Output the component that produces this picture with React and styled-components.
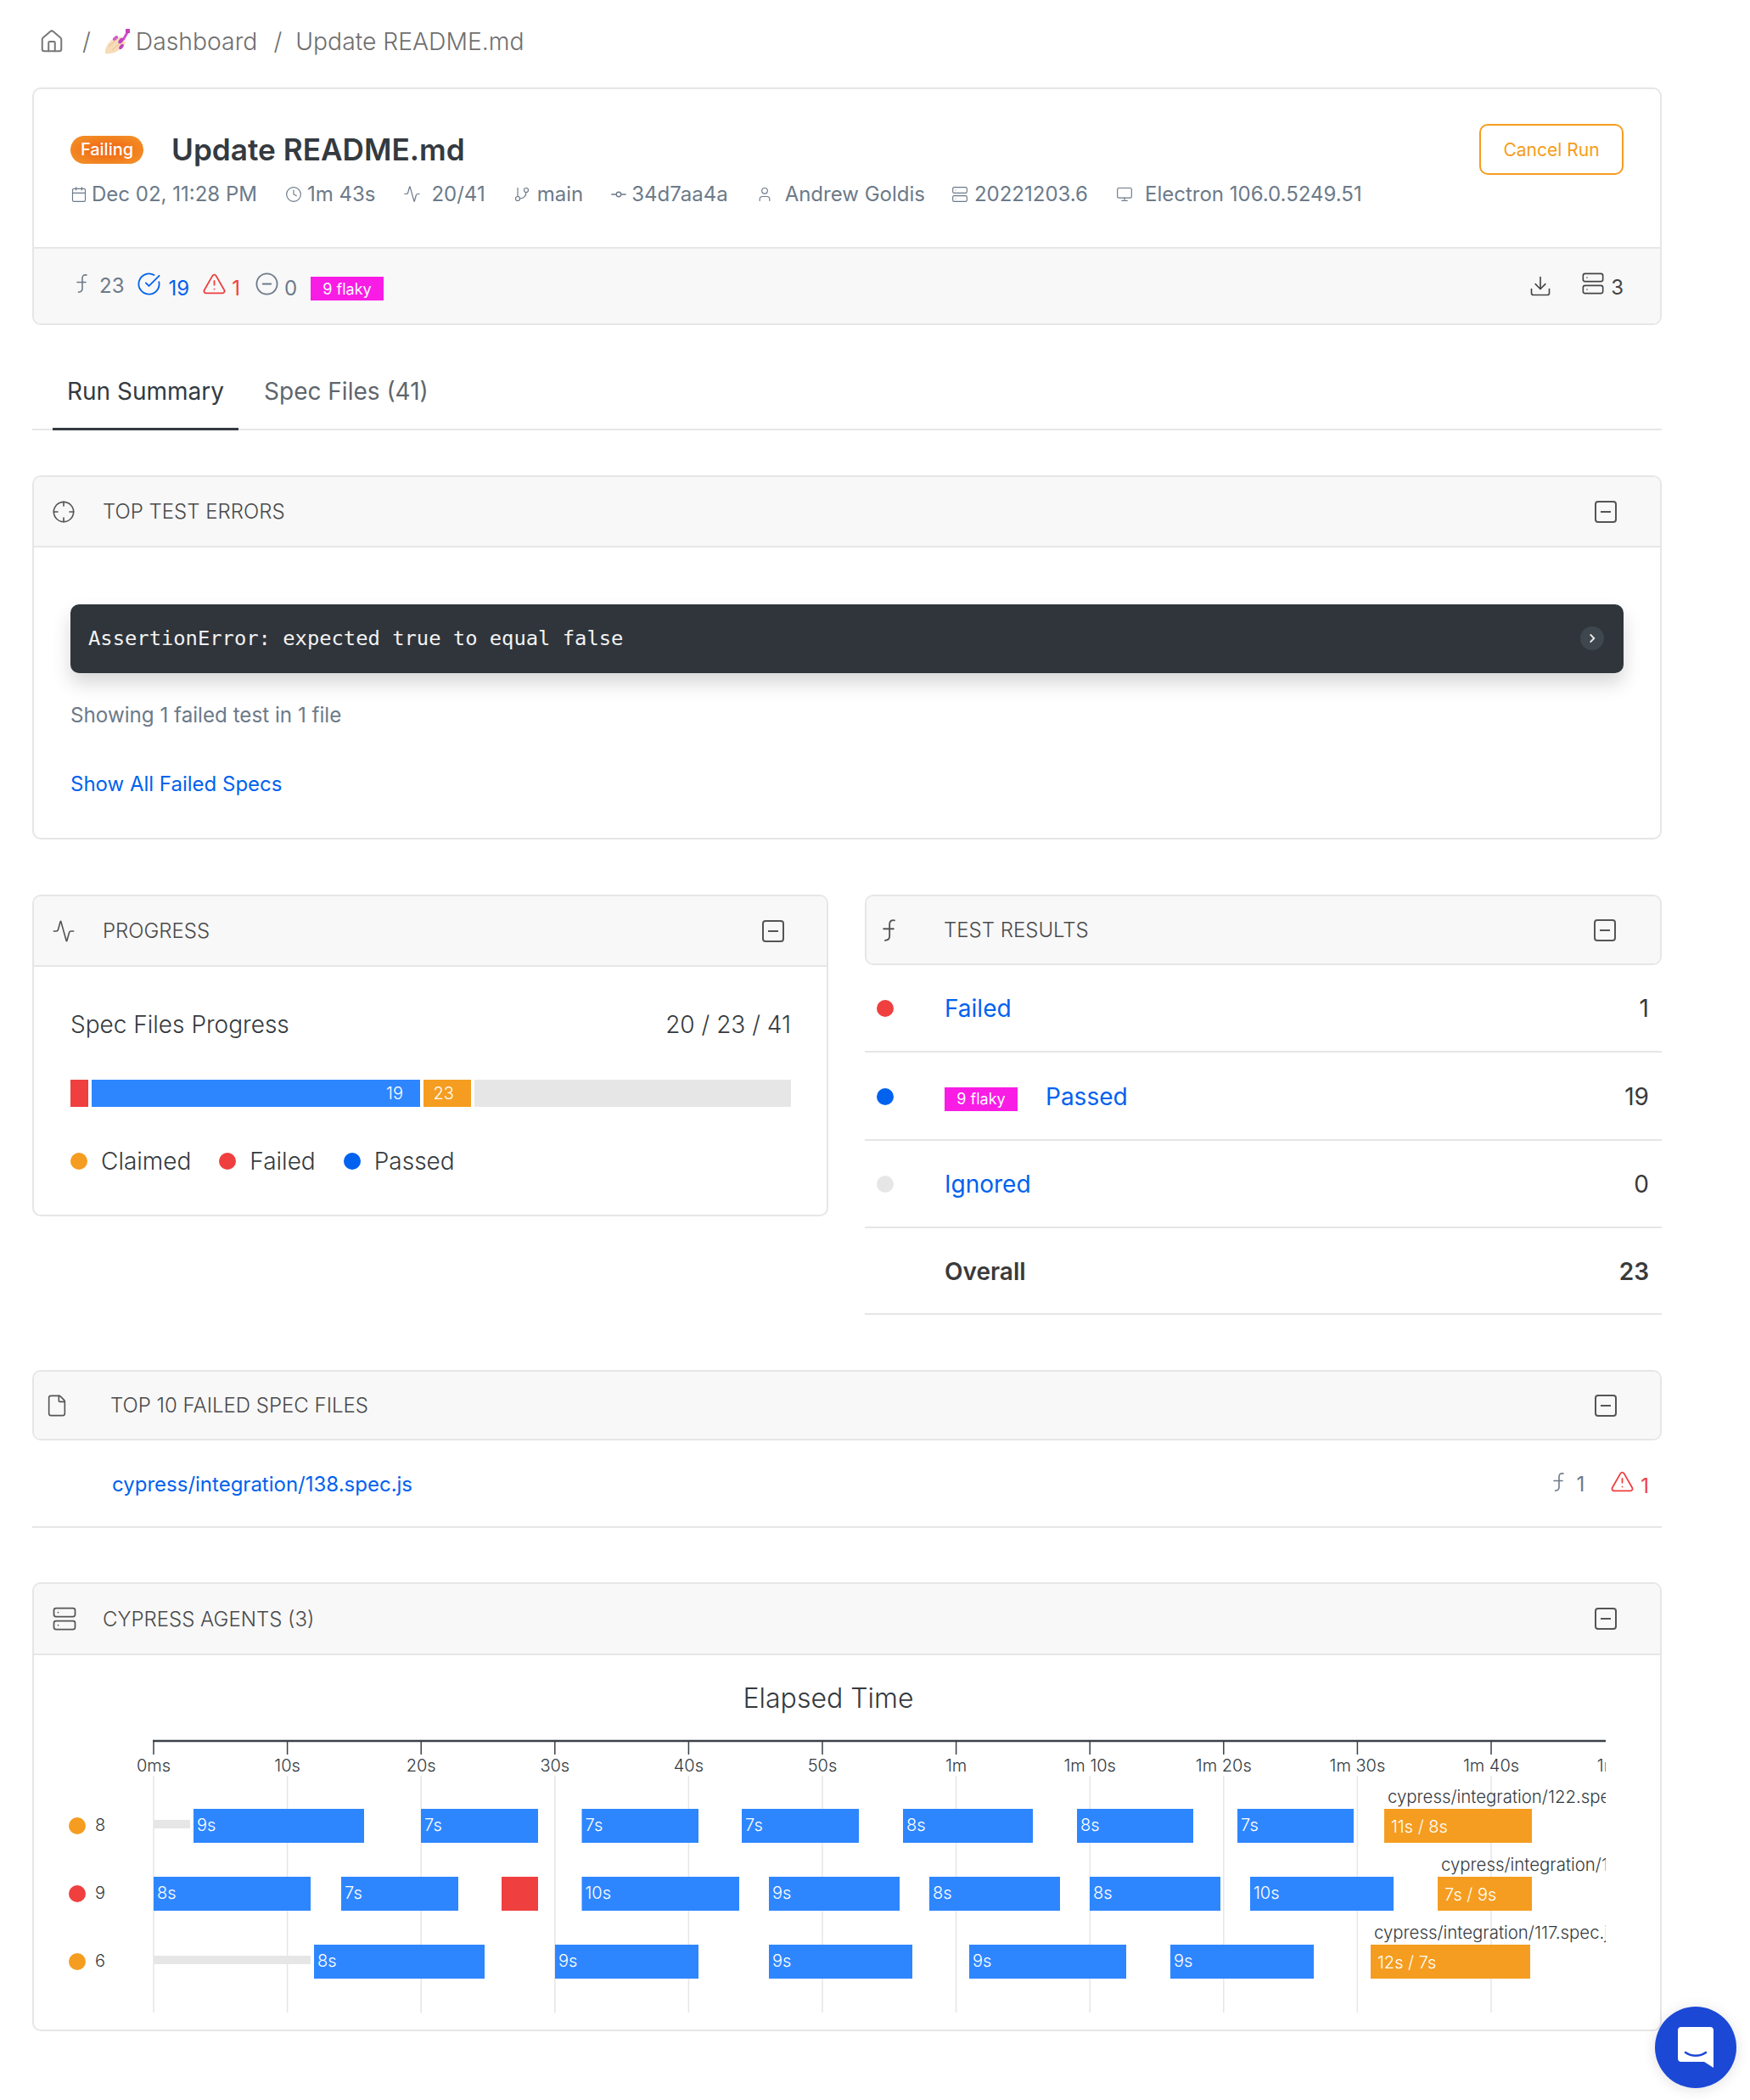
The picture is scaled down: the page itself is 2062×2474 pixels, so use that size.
import React from 'react'
import styled, { createGlobalStyle } from 'styled-components'
import {
  Activity,
  Calendar,
  CircleCheckBig,
  CircleMinus,
  Clock,
  Crosshair,
  Download,
  File,
  GitBranch,
  GitCommitHorizontal,
  Home,
  Monitor,
  Server,
  TriangleAlert,
  User,
} from 'lucide-react'

const GlobalStyles = createGlobalStyle`
  html, body {
    margin: 0;
    padding: 0;
    background: #fff;
  }
  body {
    font-family: 'Inter', 'Liberation Sans', sans-serif;
    color: #343a40;
  }
  * { box-sizing: border-box; }
`

const Page = styled.div`
  margin-left: 38px;
  width: 1920px;
  height: 2474px;
  overflow: hidden;
`

const Breadcrumb = styled.nav`
  height: 103px;
  padding: 0 0 6px 8px;
  display: flex;
  align-items: center;
  font-size: 28.3px;
  font-weight: 300;
  color: #6f6f6f;
`

const Slash = styled.span`
  margin: ${p => p.$margin};
`

const Card = styled.section`
  border: 2px solid #e6e6e6;
  border-radius: 10px;
  overflow: hidden;
  background: #fff;
`

const RunHead = styled.div`
  height: 186px;
  padding: 40px 43px 0 43px;
  position: relative;
`

const TitleRow = styled.div`
  display: flex;
  align-items: center;
  height: 62px;
`

const StatusBadge = styled.span`
  width: 86px;
  height: 33px;
  border-radius: 17px;
  display: flex;
  align-items: center;
  justify-content: center;
  color: #fff;
  font-size: 20px;
  font-weight: 500;
  background: radial-gradient(ellipse at center, #f0610f 0%, #f28a25 75%);
`

const Title = styled.h1`
  margin: 0 0 0 33px;
  font-size: 35.2px;
  font-weight: 600;
  color: #343a40;
`

const CancelButton = styled.button`
  margin-left: auto;
  width: 170px;
  height: 60px;
  border: 2px solid #f59d20;
  border-radius: 10px;
  background: #fff;
  color: #f59d20;
  font-family: inherit;
  font-size: 21px;
`

const MetaRow = styled.div`
  display: flex;
  align-items: center;
  margin-top: 7px;
  font-size: 24px;
  color: #6c7a89;
  white-space: nowrap;
`

const MetaItem = styled.span`
  display: inline-flex;
  align-items: center;
  gap: ${p => p.$gap}px;
  margin-right: ${p => p.$after ?? 33}px;
  svg { flex: none; }
`

const StatBar = styled.div`
  height: 90px;
  border-top: 2px solid #e6e6e6;
  background: #f8f8f8;
  padding: 0 43px 0 44px;
  display: flex;
  align-items: center;
`

const Stat = styled.span`
  display: inline-flex;
  align-items: flex-end;
  gap: ${p => p.$gap ?? 8}px;
  margin-right: ${p => p.$after ?? 17}px;
  font-size: 24px;
  line-height: 30px;
  color: ${p => p.$color || '#6c7a89'};
  svg { flex: none; margin-bottom: 6px; }
`

const FlakyTag = styled.span`
  display: inline-flex;
  align-items: center;
  justify-content: center;
  width: 86px;
  height: 28px;
  margin-top: 6px;
  background: #f81ce5;
  color: #fff;
  font-size: 18px;
`

const StatRight = styled.div`
  margin-left: auto;
  display: flex;
  align-items: center;
  gap: 34px;
  color: #444;
`

const Tabs = styled.div`
  height: 124px;
  border-bottom: 2px solid #e6e6e6;
  display: flex;
  align-items: flex-end;
  padding-left: 24px;
`

const Tab = styled.div`
  height: 78px;
  padding: 0 ${p => p.$pad}px 11px;
  display: flex;
  align-items: center;
  font-size: 28px;
  margin-bottom: -2px;
  color: ${p => (p.$active ? '#343a40' : '#5f666d')};
  border-bottom: 3px solid ${p => (p.$active ? '#343a40' : 'transparent')};
`

const SectionCard = styled(Card)`
  margin-top: ${p => p.$top}px;
  height: ${p => p.$height}px;
`

const Header = styled.header`
  height: ${p => p.$height || 83}px;
  display: flex;
  align-items: center;
  padding: 0 ${p => p.$right || 51}px 0 ${p => p.$left}px;
  background: #f8f8f8;
  border-bottom: ${p => (p.$flat ? '0' : '2px solid #e6e6e6')};
  color: #555;
  svg { flex: none; }
`

const HeaderIcon = styled.span`
  width: ${p => p.$width}px;
  display: flex;
  align-items: center;
`

const HeaderTitle = styled.h2`
  margin: 0;
  font-size: 24px;
  font-weight: 300;
  color: #4a4a4a;
  flex: 1;
`

const ErrorBody = styled.div`
  padding: 67px 43px 0;
`

const ErrorBox = styled.div`
  height: 81px;
  border-radius: 10px;
  background: #2f353b;
  color: #f2f2f2;
  font-family: 'DejaVu Sans Mono', 'Liberation Mono', monospace;
  font-size: 23.8px;
  padding: 0 21px 1px;
  display: flex;
  align-items: center;
  justify-content: space-between;
  box-shadow: 0 12px 22px rgba(0, 0, 0, 0.16);
`

const Chevron = styled.span`
  width: 28px;
  height: 28px;
  margin-right: 2px;
  border-radius: 50%;
  background: #3f474e;
  display: flex;
  align-items: center;
  justify-content: center;
`

const MutedLine = styled.p`
  margin: 32px 0 0;
  font-size: 24.2px;
  line-height: 36px;
  color: #6c7a89;
`

const TextLink = styled.a`
  display: block;
  color: #0062ee;
  font-size: 24px;
  line-height: 36px;
  margin-top: ${p => p.$top || 0}px;
`

const Columns = styled.div`
  display: flex;
  gap: 43px;
  margin-top: 65px;
  align-items: flex-start;
`

const ProgressCol = styled.div`
  width: 938px;
  flex: none;
`

const ResultsCol = styled.div`
  flex: 1;
`

const ProgressBody = styled.div`
  padding: 46px 42px 0 43px;
`

const ProgressTitle = styled.div`
  display: flex;
  justify-content: space-between;
  font-size: 28px;
  font-weight: 300;
  line-height: 44px;
  color: #343a40;
`

const Bar = styled.div`
  display: flex;
  gap: 4px;
  height: 32px;
  margin-top: 43px;
`

const Segment = styled.div`
  width: ${p => p.$width}px;
  flex: ${p => (p.$grow ? 1 : 'none')};
  background: ${p => p.$color};
  color: #fff;
  font-size: 20px;
  font-weight: 300;
  display: flex;
  align-items: center;
  justify-content: flex-end;
  padding-right: ${p => p.$pad || 0}px;
`

const Legend = styled.div`
  display: flex;
  align-items: center;
  margin-top: 44px;
  font-size: 28px;
  font-weight: 300;
  line-height: 40px;
`

const Dot = styled.span`
  width: 20px;
  height: 20px;
  flex: none;
  border-radius: 50%;
  background: ${p => p.$color};
`

const LegendItem = styled.span`
  display: inline-flex;
  align-items: center;
  gap: 16px;
  margin-right: 33px;
`

const ResultRow = styled.div`
  height: ${p => p.$height}px;
  border-bottom: 2px solid #e6e6e6;
  display: flex;
  align-items: center;
  padding: 1px 15px 0 14px;
  font-size: 28px;
`

const ResultName = styled.span`
  margin-left: 60px;
  flex: 1;
  display: flex;
  align-items: center;
  gap: 33px;
  color: #0062ee;
  font-weight: 400;
`

const OverallName = styled.span`
  margin-left: 80px;
  flex: 1;
  font-weight: 600;
  color: #3a3a3a;
`

const ResultCount = styled.span`
  color: #3a3a3a;
  font-weight: ${p => p.$weight || 400};
`

const SpecRow = styled.div`
  height: 103px;
  border-bottom: 2px solid #e6e6e6;
  display: flex;
  align-items: center;
  padding: 2px 15px 0 94px;
`

const SpecCounts = styled.div`
  margin-left: auto;
  display: flex;
  align-items: center;
`

const ChartSvg = styled.svg`
  display: block;
  font-family: 'Inter', 'Liberation Sans', sans-serif;
`

const ChatBubble = styled.div`
  position: fixed;
  right: 16px;
  bottom: 14px;
  width: 96px;
  height: 96px;
  border-radius: 50%;
  background: #1c48d6;
  display: flex;
  align-items: center;
  justify-content: center;
  box-shadow: 0 2px 16px rgba(0, 0, 0, 0.12);
`

const MinusBox = () => (
  <svg width="26" height="26" viewBox="0 0 26 26" fill="none" stroke="#555" strokeWidth="2">
    <rect x="1" y="1" width="24" height="24" rx="3" />
    <path d="M7 13h12" />
  </svg>
)

const FnIcon = ({ size = 24, color = 'currentColor' }) => (
  <svg width={size} height={size} viewBox="0 0 24 24" fill="none" stroke={color} strokeWidth="1.6" strokeLinecap="round">
    <path d="M18 2c-3-.6-5 .5-5 4v12c0 3-1.5 4-4.5 4.2" />
    <path d="M7 10.5h10" />
  </svg>
)

const NailEmoji = () => (
  <svg width="30" height="30" viewBox="0 0 30 30" style={{ margin: '0 7px 0 16px' }}>
    <path d="M1 29C0 22 5 16 10 12l9-3 6 8-5 6c-6 5-12 7-19 6Z" fill="#f6dcb8" />
    <path d="M5 21l8-7M9 25l8-7" stroke="#e3bd90" strokeWidth="1" />
    <path d="M22 13 29 1" stroke="#d14fc9" strokeWidth="3" />
    <rect x="25" y="0" width="5" height="5" fill="#c83fbb" />
    <ellipse cx="13" cy="11" rx="3.6" ry="2" transform="rotate(-40 13 11)" fill="#cf5fd0" />
    <ellipse cx="19.5" cy="14" rx="4" ry="2.3" transform="rotate(-50 19.5 14)" fill="#c243bf" />
    <ellipse cx="20" cy="21" rx="3.6" ry="2" transform="rotate(-50 20 21)" fill="#c243bf" />
  </svg>
)

const ChatIcon = () => (
  <svg width="44" height="50" viewBox="0 0 44 50">
    <path d="M5 1h34a4 4 0 0 1 4 4v44l-11-7H5a4 4 0 0 1-4-4V5a4 4 0 0 1 4-4Z" fill="#fff" />
    <path d="M10 31c7 5 17 5 24 0" fill="none" stroke="#1c48d6" strokeWidth="2.6" strokeLinecap="round" />
  </svg>
)

const ticks = ['0ms', '10s', '20s', '30s', '40s', '50s', '1m', '1m 10s', '1m 20s', '1m 30s', '1m 40s', '1m 50s']
const tickX = i => 181 + i * 157.6

const lanes = [
  {
    id: 8,
    color: '#f59d20',
    y: 2131,
    wait: [181, 224],
    bars: [
      [228, 429, '9s'], [496, 634, '7s'], [685.5, 823, '7s'], [874, 1012, '7s'],
      [1064, 1217, '8s'], [1269, 1406, '8s'], [1458, 1595, '7s'],
    ],
    running: [1631, 1805, '11s / 8s', 'cypress/integration/122.spec.js', 1635],
  },
  {
    id: 9,
    color: '#ef3f3f',
    y: 2211,
    bars: [
      [181, 366, '8s'], [402, 540, '7s'], [591, 634, '', '#ef3f3f'], [685.5, 871, '10s'],
      [906, 1060, '9s'], [1095, 1249, '8s'], [1284, 1438, '8s'], [1473, 1642, '10s'],
    ],
    running: [1694, 1805, '7s / 9s', 'cypress/integration/119.spec.js', 1698],
  },
  {
    id: 6,
    color: '#f59d20',
    y: 2291,
    wait: [181, 366],
    bars: [
      [370, 571, '8s'], [654, 823, '9s'], [906, 1075, '9s'], [1142, 1327, '9s'], [1379, 1548, '9s'],
    ],
    running: [1615, 1803, '12s / 7s', 'cypress/integration/117.spec.js', 1619],
  },
]

// drawn in page coordinates, the viewBox starts where the card's inside starts
const ElapsedChart = () => (
  <ChartSvg width="1916" height="441" viewBox="40 1950 1916 441">
    <defs>
      <clipPath id="plot">
        <rect x="40" y="1950" width="1852" height="441" />
      </clipPath>
    </defs>
    <text x="976" y="2000" fontSize="32" fontWeight="300" fill="#343a40" textAnchor="middle" dominantBaseline="central">
      Elapsed Time
    </text>
    <g clipPath="url(#plot)">
      {ticks.map((t, i) => (
        <g key={t}>
          <line x1={tickX(i)} x2={tickX(i)} y1="2092" y2="2371" stroke="#e6e6e6" strokeWidth="1.5" />
          <line x1={tickX(i)} x2={tickX(i)} y1="2051" y2="2067" stroke="#3b4148" strokeWidth="1.5" />
          <text x={tickX(i)} y="2080" fontSize="20" fontWeight="300" fill="#343a40" textAnchor="middle" dominantBaseline="central">
            {t}
          </text>
        </g>
      ))}
      <line x1="180" x2="1892" y1="2051" y2="2051" stroke="#3b4148" strokeWidth="2.5" />
      {lanes.map(lane => (
        <g key={lane.id}>
          <circle cx="91" cy={lane.y + 20} r="10" fill={lane.color} />
          <text x="112" y={lane.y + 19} fontSize="20" fontWeight="300" fill="#343a40" dominantBaseline="central">
            {lane.id}
          </text>
          {lane.wait && (
            <rect x={lane.wait[0]} y={lane.y + 13} width={lane.wait[1] - lane.wait[0]} height="10" fill="#e6e6e6" />
          )}
          {lane.bars.map(([from, to, label, fill]) => (
            <g key={from}>
              <rect x={from} y={lane.y} width={to - from} height="40" fill={fill || '#2e86ff'} />
              <text x={from + 4} y={lane.y + 19} fontSize="20" fontWeight="300" fill="#fff" dominantBaseline="central">
                {label}
              </text>
            </g>
          ))}
          <rect x={lane.running[0]} y={lane.y} width={lane.running[1] - lane.running[0]} height="40" fill="#f59d20" />
          <text x={lane.running[0] + 8} y={lane.y + 21} fontSize="20" fontWeight="300" fill="#fff" dominantBaseline="central">
            {lane.running[2]}
          </text>
          <text x={lane.running[4]} y={lane.y - 15} fontSize="20.4" fontWeight="300" fill="#343a40" dominantBaseline="central">
            {lane.running[3]}
          </text>
        </g>
      ))}
    </g>
  </ChartSvg>
)

export default function App() {
  return (
    <>
      <GlobalStyles />
      <Page>
        <Breadcrumb>
          <Home size={30} strokeWidth={1.6} color="#777" />
          <Slash $margin="0 0 0 21px">/</Slash>
          <NailEmoji />
          <span>Dashboard</span>
          <Slash $margin="0 16px 0 19px">/</Slash>
          <span>Update README.md</span>
        </Breadcrumb>

        <Card>
          <RunHead>
            <TitleRow>
              <StatusBadge>Failing</StatusBadge>
              <Title>Update README.md</Title>
              <CancelButton>Cancel Run</CancelButton>
            </TitleRow>
            <MetaRow>
              <MetaItem $gap={5}><Calendar size={20} strokeWidth={1.4} />Dec 02, 11:28 PM</MetaItem>
              <MetaItem $gap={6}><Clock size={20} strokeWidth={1.4} />1m 43s</MetaItem>
              <MetaItem $gap={12}><Activity size={21} strokeWidth={1.4} />20/41</MetaItem>
              <MetaItem $gap={8} $after={31}><GitBranch size={20} strokeWidth={1.4} />main</MetaItem>
              <MetaItem $gap={4}><GitCommitHorizontal size={22} strokeWidth={1.4} />34d7aa4a</MetaItem>
              <MetaItem $gap={14} $after={31}><User size={20} strokeWidth={1.4} />Andrew Goldis</MetaItem>
              <MetaItem $gap={7}><Server size={20} strokeWidth={1.4} />20221203.6</MetaItem>
              <MetaItem $gap={14} $after={0}><Monitor size={20} strokeWidth={1.4} />Electron 106.0.5249.51</MetaItem>
            </MetaRow>
          </RunHead>
          <StatBar>
            <Stat $gap={9} $after={15}><FnIcon size={24} />23</Stat>
            <Stat $color="#0062ee" $after={15}><CircleCheckBig size={29} strokeWidth={1.5} />19</Stat>
            <Stat $color="#ef3f3f" $gap={6}><TriangleAlert size={29} strokeWidth={1.5} />1</Stat>
            <Stat $gap={6} $after={16}><CircleMinus size={29} strokeWidth={1.5} />0</Stat>
            <FlakyTag>9 flaky</FlakyTag>
            <StatRight>
              <Download size={28} strokeWidth={1.4} />
              <Stat $gap={7} $after={0} $color="#444"><Server size={28} strokeWidth={1.4} />3</Stat>
            </StatRight>
          </StatBar>
        </Card>

        <Tabs>
          <Tab $active $pad={17}>Run Summary</Tab>
          <Tab $pad={30}>Spec Files (41)</Tab>
        </Tabs>

        <SectionCard $top={53} $height={429}>
          <Header $left={21}>
            <HeaderIcon $width={60}><Crosshair size={28} strokeWidth={1.4} /></HeaderIcon>
            <HeaderTitle>TOP TEST ERRORS</HeaderTitle>
            <MinusBox />
          </Header>
          <ErrorBody>
            <ErrorBox>
              AssertionError: expected true to equal false
              <Chevron>
                <svg width="16" height="16" viewBox="0 0 14 14" fill="none" stroke="#eee" strokeWidth="1.6"><path d="m5 3 4 4-4 4" /></svg>
              </Chevron>
            </ErrorBox>
            <MutedLine>Showing 1 failed test in 1 file</MutedLine>
            <TextLink $top={45}>Show All Failed Specs</TextLink>
          </ErrorBody>
        </SectionCard>

        <Columns>
          <ProgressCol>
            <SectionCard $top={0} $height={379}>
              <Header $left={21} $right={50}>
                <HeaderIcon $width={60}><Activity size={28} strokeWidth={1.4} /></HeaderIcon>
                <HeaderTitle>PROGRESS</HeaderTitle>
                <MinusBox />
              </Header>
              <ProgressBody>
                <ProgressTitle>
                  <span>Spec Files Progress</span>
                  <span>20 / 23 / 41</span>
                </ProgressTitle>
                <Bar>
                  <Segment $width={21} $color="#ef3f3f" />
                  <Segment $width={387} $color="#2e86ff" $pad={20}>19</Segment>
                  <Segment $width={56} $color="#f59d20" $pad={20}>23</Segment>
                  <Segment $grow $color="#e6e6e6" />
                </Bar>
                <Legend>
                  <LegendItem><Dot $color="#f59d20" />Claimed</LegendItem>
                  <LegendItem><Dot $color="#ef3f3f" />Failed</LegendItem>
                  <LegendItem><Dot $color="#0062ee" />Passed</LegendItem>
                </Legend>
              </ProgressBody>
            </SectionCard>
          </ProgressCol>
          <ResultsCol>
            <Card>
              <Header $left={12} $right={52} $height={79} $flat>
                <HeaderIcon $width={79}><FnIcon size={28} /></HeaderIcon>
                <HeaderTitle>TEST RESULTS</HeaderTitle>
                <MinusBox />
              </Header>
            </Card>
            <ResultRow $height={103}>
              <Dot $color="#ef3f3f" />
              <ResultName>Failed</ResultName>
              <ResultCount>1</ResultCount>
            </ResultRow>
            <ResultRow $height={104}>
              <Dot $color="#0062ee" />
              <ResultName><FlakyTag>9 flaky</FlakyTag>Passed</ResultName>
              <ResultCount>19</ResultCount>
            </ResultRow>
            <ResultRow $height={103}>
              <Dot $color="#e6e6e6" />
              <ResultName>Ignored</ResultName>
              <ResultCount>0</ResultCount>
            </ResultRow>
            <ResultRow $height={102}>
              <OverallName>Overall</OverallName>
              <ResultCount $weight={600}>23</ResultCount>
            </ResultRow>
          </ResultsCol>
        </Columns>

        <SectionCard $top={65} $height={83}>
          <Header $left={13} $height={79} $flat>
            <HeaderIcon $width={77}><File size={28} strokeWidth={1.4} /></HeaderIcon>
            <HeaderTitle>TOP 10 FAILED SPEC FILES</HeaderTitle>
            <MinusBox />
          </Header>
        </SectionCard>
        <SpecRow>
          <TextLink>cypress/integration/138.spec.js</TextLink>
          <SpecCounts>
            <Stat $gap={9} $after={30}><FnIcon size={24} />1</Stat>
            <Stat $color="#ef3f3f" $gap={7} $after={0}><TriangleAlert size={29} strokeWidth={1.5} />1</Stat>
          </SpecCounts>
        </SpecRow>

        <SectionCard $top={64} $height={529}>
          <Header $left={21} $height={84}>
            <HeaderIcon $width={60}><Server size={30} strokeWidth={1.4} /></HeaderIcon>
            <HeaderTitle>CYPRESS AGENTS (3)</HeaderTitle>
            <MinusBox />
          </Header>
          <ElapsedChart />
        </SectionCard>
      </Page>
      <ChatBubble><ChatIcon /></ChatBubble>
    </>
  )
}
